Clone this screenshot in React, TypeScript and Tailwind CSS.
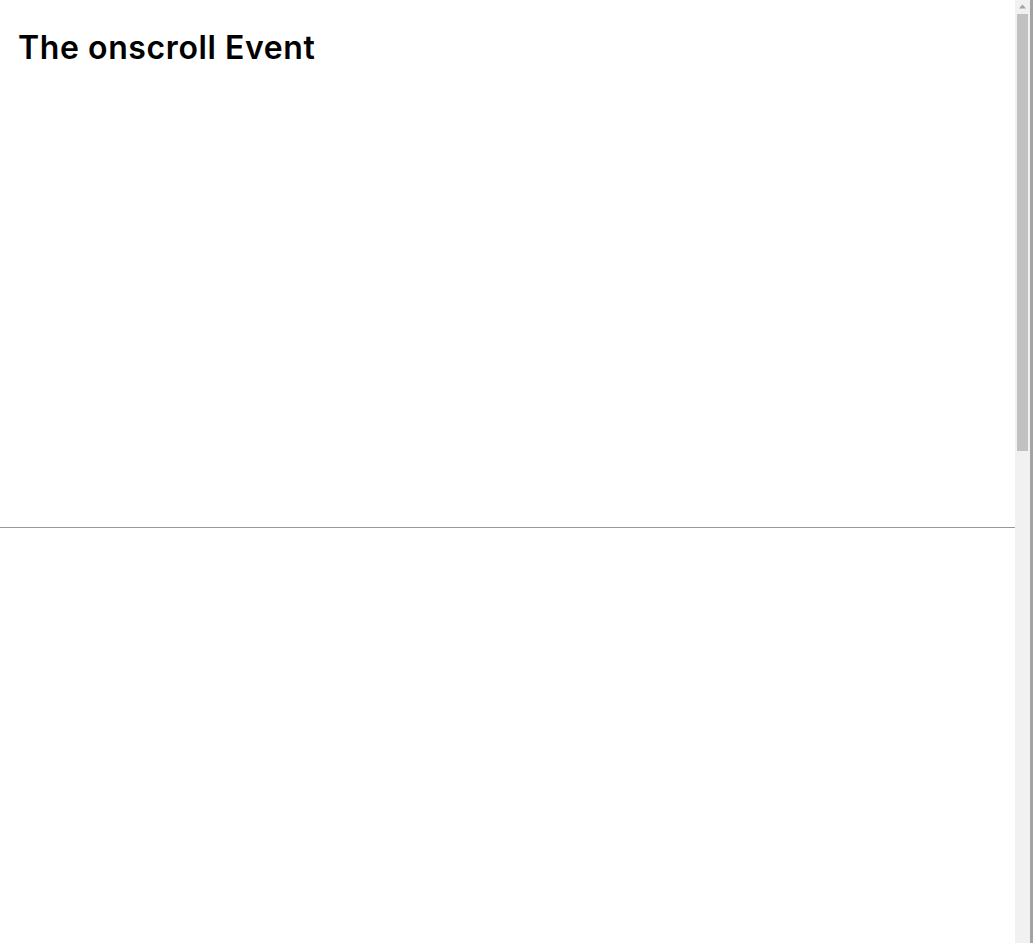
function ScrollTrack() {
  return (
    <div className="flex w-[15px] shrink-0 flex-col items-center bg-[#f1f1f1]">
      <svg width="15" height="14" viewBox="0 0 15 14" className="shrink-0">
        <path d="M4 8.5 L7.5 4.5 L11 8.5 Z" fill="#a3a3a3" />
      </svg>
      <div className="h-[437px] w-[11px] bg-[#c1c1c1]" />
    </div>
  );
}

export default function App() {
  return (
    <div className="flex h-screen overflow-hidden bg-white">
      <div
        className="min-w-0 flex-1"
        style={{ fontFamily: 'Inter, "Open Sans", sans-serif' }}
      >
        <div className="h-[528px] border-b border-[#999999] pl-[18px] pr-[19px] pt-[28px]">
          <h1 className="text-[32px] font-semibold leading-[40px] tracking-[0.6px] text-black">
            The onscroll Event
          </h1>
        </div>
        <div className="h-[1446px]" />
      </div>
      <ScrollTrack />
      <div className="w-[3px] shrink-0 bg-[#a3a3a3]" />
    </div>
  );
}
